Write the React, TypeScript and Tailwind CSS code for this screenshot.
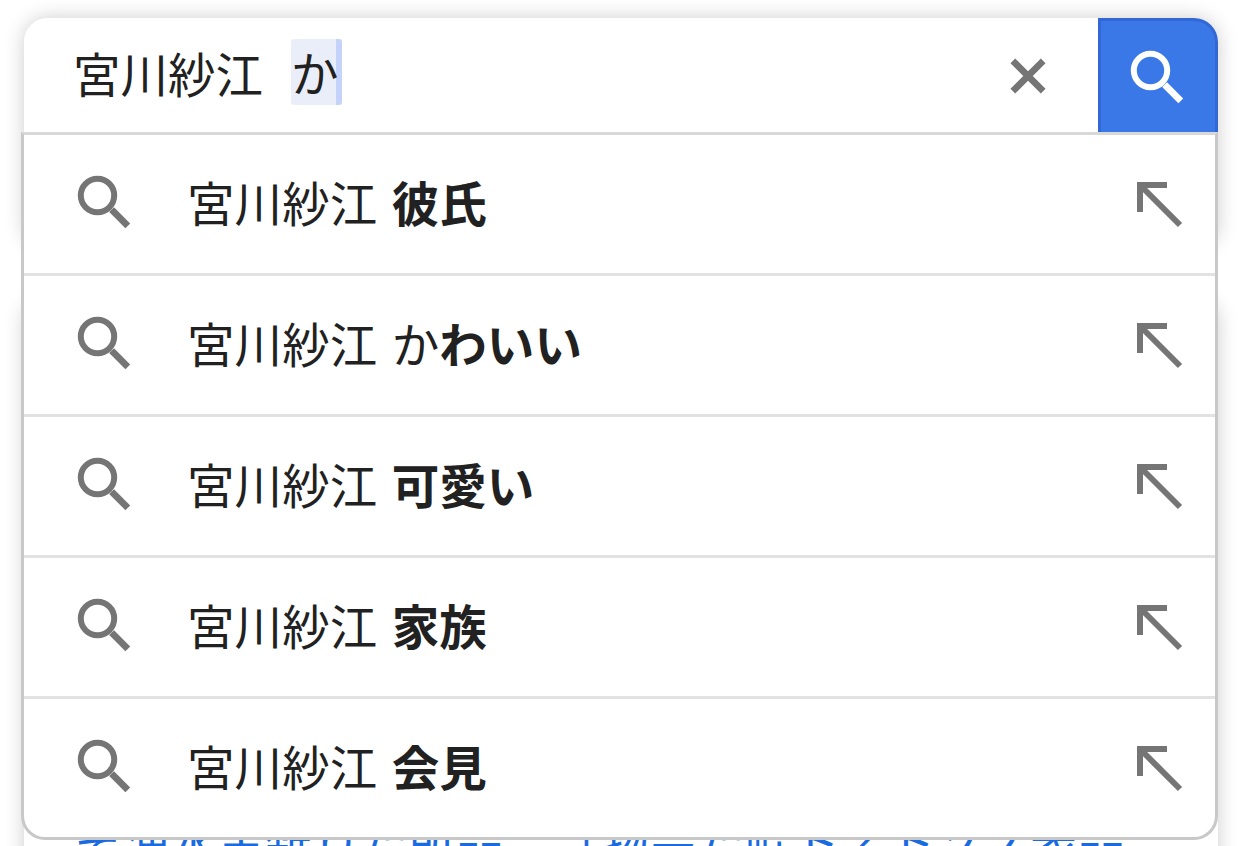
import { clsx } from 'clsx';

const suggestions = [
  { typed: '宮川紗江 ', rest: '彼氏' },
  { typed: '宮川紗江 か', rest: 'わいい' },
  { typed: '宮川紗江 ', rest: '可愛い' },
  { typed: '宮川紗江 ', rest: '家族' },
  { typed: '宮川紗江 ', rest: '会見' },
];

function SearchIcon({ className }: { className: string }) {
  return (
    <svg viewBox="0 0 54 54" fill="none" stroke="currentColor" className={clsx('h-[54px] w-[54px] shrink-0', className)}>
      <circle cx="20.5" cy="20.5" r="16.7" strokeWidth="6" />
      <path d="M34.6 34.6 L50.8 50.8" strokeWidth="6.8" />
    </svg>
  );
}

function ArrowIcon() {
  return (
    <svg viewBox="0 0 46 46" fill="none" stroke="currentColor" className="mr-[32px] mt-[2px] h-[46px] w-[46px] shrink-0 text-[#757575]">
      <path d="M3 30 V3 H30" strokeWidth="6" />
      <path d="M3 3 L43 43" strokeWidth="6" />
    </svg>
  );
}

function SearchBar() {
  return (
    <div className="flex h-[114px] pl-[3px]">
      <div className="flex flex-1 items-center overflow-hidden rounded-tl-[24px] bg-white pl-[49px]">
        <span className="mb-[5px] whitespace-pre">宮川紗江</span>
        <span className="mb-[6px] ml-[28px] flex h-[66px] w-[51px] items-center rounded-[3px] border-r-[6px] border-[#c5d2fa] bg-[#e9eef8]">か</span>
        <svg viewBox="0 0 36 36" stroke="currentColor" strokeWidth="6.6" className="ml-auto mr-[52px] mt-[2px] h-[36px] w-[36px] text-[#757575]">
          <path d="M2.8 2.8 L33.2 33.2 M33.2 2.8 L2.8 33.2" />
        </svg>
      </div>
      <button className="flex w-[120px] items-center justify-center rounded-tr-[24px] border-x-[3px] border-t-[3px] border-[#3367d6] bg-[#3b78e7]">
        <SearchIcon className="mr-[2px] text-white" />
      </button>
    </div>
  );
}

export default function App() {
  return (
    <div className="relative h-[846px] w-[1242px] overflow-hidden bg-white font-['Noto_Sans_CJK_JP',sans-serif] text-[47.5px] leading-[66px] text-[#212121]">
      {/* Page cards behind the suggestions */}
      <div className="flex flex-col gap-[50px] px-6 pt-[18px]">
        <div className="h-[230px] rounded-[24px] bg-white shadow-[0_0_20px_rgba(0,0,0,0.2)]" />
        <div className="h-[700px] rounded-[24px] bg-white shadow-[0_0_20px_rgba(0,0,0,0.2)]">
          <p className="flex gap-[26px] whitespace-nowrap pl-[50px] pt-[509px] tracking-[0.25px] text-[#1a6be0]">
            <span>そ油水主雑りた所品</span>
            <span>　「物会た鞋トえトソノ表品</span>
          </p>
        </div>
      </div>

      <div className="absolute left-[21px] top-[18px] w-[1197px]">
        <SearchBar />
        <ul className="rounded-b-[24px] border-[3px] border-[#c8c8c8] border-t-[#d8d8d8] bg-white">
          {suggestions.map((item) => (
            <li key={item.rest} className="flex h-[141px] items-center border-b-[3px] border-[#e2e2e2] pl-[53px] last:h-[138px] last:border-b-0">
              <SearchIcon className="mb-[5px] text-[#757575]" />
              <span className="mb-[5px] ml-[56px] flex-1 whitespace-pre tracking-[0.1px] [word-spacing:3.5px]">
                {item.typed}
                <b className="font-bold">{item.rest}</b>
              </span>
              <ArrowIcon />
            </li>
          ))}
        </ul>
      </div>
    </div>
  );
}
